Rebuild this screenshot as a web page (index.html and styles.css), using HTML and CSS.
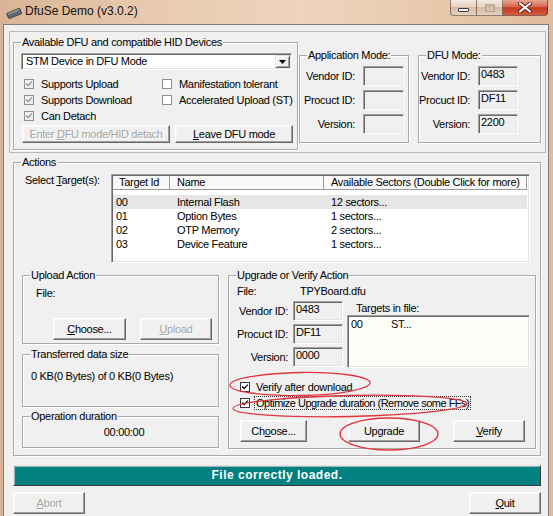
FILE: index.html
```html
<!DOCTYPE html>
<html>
<head>
<meta charset="utf-8">
<title>DfuSe Demo</title>
<link rel="stylesheet" href="styles.css">
</head>
<body>
<div class="titlebar">
  <svg class="appicon" width="18" height="14" viewBox="0 0 18 14">
    <g transform="rotate(-22 9 7)">
      <rect x="2" y="4.5" width="14" height="6" rx="1" fill="#5f666e" stroke="#2f3337" stroke-width="0.8"/>
      <rect x="3" y="5.2" width="12" height="1.6" fill="#8e959c"/>
      <g fill="#c9b27a">
        <rect x="3" y="2.6" width="1.2" height="1.8"/><rect x="5.4" y="2.6" width="1.2" height="1.8"/>
        <rect x="7.8" y="2.6" width="1.2" height="1.8"/><rect x="10.2" y="2.6" width="1.2" height="1.8"/>
        <rect x="12.6" y="2.6" width="1.2" height="1.8"/>
        <rect x="3" y="10.6" width="1.2" height="1.6"/><rect x="5.4" y="10.6" width="1.2" height="1.6"/>
        <rect x="7.8" y="10.6" width="1.2" height="1.6"/><rect x="10.2" y="10.6" width="1.2" height="1.6"/>
        <rect x="12.6" y="10.6" width="1.2" height="1.6"/>
      </g>
    </g>
  </svg>
  <span class="title">DfuSe Demo (v3.0.2)</span>
  <div class="caption">
    <div class="cbtn min"><span class="min-glyph"></span></div>
    <div class="cbtn max"><span class="max-glyph"></span></div>
    <div class="cbtn close">
      <svg width="16" height="11" viewBox="0 0 16 11">
        <path d="M3 1.5 L13 9.5 M13 1.5 L3 9.5" stroke="#5a1f16" stroke-width="4" stroke-linecap="round"/>
        <path d="M3 1.5 L13 9.5 M13 1.5 L3 9.5" stroke="#ffffff" stroke-width="2.2" stroke-linecap="round"/>
      </svg>
    </div>
  </div>
</div>

<div class="client">
  <div class="toppanel">
    <div class="group g-dev">
      <span class="legend">Available DFU and compatible HID Devices</span>
      <div class="combo">
        <span class="combo-text">STM Device in DFU Mode</span>
        <span class="combo-btn"><svg width="7" height="4" viewBox="0 0 7 4"><path d="M0 0h7L3.5 4z" fill="#000"/></svg></span>
      </div>
      <div class="checks">
        <div class="chk"><span class="cb dis"><svg viewBox="0 0 10 10"><path d="M1.5 4.5 L4 7 L8.5 2" fill="none" stroke="#8d8d8d" stroke-width="1.6"/></svg></span><span>Supports Upload</span></div>
        <div class="chk"><span class="cb"></span><span>Manifestation tolerant</span></div>
        <div class="chk"><span class="cb dis"><svg viewBox="0 0 10 10"><path d="M1.5 4.5 L4 7 L8.5 2" fill="none" stroke="#8d8d8d" stroke-width="1.6"/></svg></span><span>Supports Download</span></div>
        <div class="chk"><span class="cb"></span><span>Accelerated Upload (ST)</span></div>
        <div class="chk"><span class="cb dis"><svg viewBox="0 0 10 10"><path d="M1.5 4.5 L4 7 L8.5 2" fill="none" stroke="#8d8d8d" stroke-width="1.6"/></svg></span><span>Can Detach</span></div>
      </div>
      <div class="dev-btns">
        <div class="btn dis w-enter"><span>Enter <u>D</u>FU mode/HID detach</span></div>
        <div class="btn w-leave"><span><u>L</u>eave DFU mode</span></div>
      </div>
    </div>

    <div class="group g-app">
      <span class="legend">Application Mode:</span>
      <div class="idrows app-rows">
        <div class="idrow"><span class="idl">Vendor ID:</span><span class="edit"></span></div>
        <div class="idrow"><span class="idl">Procuct ID:</span><span class="edit"></span></div>
        <div class="idrow"><span class="idl">Version:</span><span class="edit"></span></div>
      </div>
    </div>

    <div class="group g-dfu">
      <span class="legend">DFU Mode:</span>
      <div class="idrows dfu-rows">
        <div class="idrow"><span class="idl">Vendor ID:</span><span class="edit">0483</span></div>
        <div class="idrow"><span class="idl">Procuct ID:</span><span class="edit">DF11</span></div>
        <div class="idrow"><span class="idl">Version:</span><span class="edit">2200</span></div>
      </div>
    </div>
  </div>

  <div class="group g-actions">
    <span class="legend">Actions</span>
    <div class="sel-row">
      <span class="sel-label">Select <u>T</u>arget(s):</span>
      <div class="list">
        <div class="lv-head">
          <span class="h1">Target Id</span><span class="h2">Name</span><span class="h3">Available Sectors (Double Click for more)</span>
        </div>
        <div class="lv-body">
          <div class="lv-row sel"><span class="c1">00</span><span class="c2">Internal Flash</span><span class="c3">12 sectors...</span></div>
          <div class="lv-row"><span class="c1">01</span><span class="c2">Option Bytes</span><span class="c3">1 sectors...</span></div>
          <div class="lv-row"><span class="c1">02</span><span class="c2">OTP Memory</span><span class="c3">2 sectors...</span></div>
          <div class="lv-row"><span class="c1">03</span><span class="c2">Device Feature</span><span class="c3">1 sectors...</span></div>
        </div>
      </div>
    </div>

    <div class="lower">
      <div class="leftcol">
        <div class="group g-upload">
          <span class="legend">Upload Action</span>
          <div class="u-file">File:</div>
          <div class="u-btns">
            <div class="btn w73"><span><u>C</u>hoose...</span></div>
            <div class="btn dis w72"><span><u>U</u>pload</span></div>
          </div>
        </div>
        <div class="group g-xfer">
          <span class="legend">Transferred data size</span>
          <div class="xfer-text">0 KB(0 Bytes) of 0 KB(0 Bytes)</div>
        </div>
        <div class="group g-dur">
          <span class="legend">Operation duration</span>
          <div class="dur-text">00:00:00</div>
        </div>
      </div>

      <div class="group g-upgrade">
        <span class="legend">Upgrade or Verify Action</span>
        <div class="ug-file"><span class="ug-fl">File:</span><span>TPYBoard.dfu</span></div>
        <div class="ug-mid">
          <div class="ug-ids">
            <div class="uidrow"><span class="uidl">Vendor ID:</span><span class="edit w50">0483</span></div>
            <div class="uidrow"><span class="uidl">Procuct ID:</span><span class="edit w50">DF11</span></div>
            <div class="uidrow"><span class="uidl">Version:</span><span class="edit w50">0000</span></div>
          </div>
          <div class="ug-targets">
            <div class="tif-label">Targets in file:</div>
            <div class="tif-box"><span class="t1">00</span><span>ST...</span></div>
          </div>
        </div>
        <div class="ug-chk"><span class="cb on"><svg viewBox="0 0 10 10"><path d="M1.5 4.5 L4 7 L8.5 2" fill="none" stroke="#000" stroke-width="1.7"/></svg></span><span>Verify after download</span></div>
        <div class="ug-chk"><span class="cb on"><svg viewBox="0 0 10 10"><path d="M1.5 4.5 L4 7 L8.5 2" fill="none" stroke="#000" stroke-width="1.7"/></svg></span><span class="focus">Optimize Upgrade duration (Remove some FFs)</span></div>
        <div class="ug-btns">
          <div class="btn w67"><span>Ch<u>o</u>ose...</span></div>
          <div class="btn w72 b-upg"><span>Upgrade</span></div>
          <div class="btn w72 b-ver"><span><u>V</u>erify</span></div>
        </div>
      </div>
    </div>
  </div>

  <div class="status">File correctly loaded.</div>

  <div class="bottom-row">
    <div class="btn dis w72"><span><u>A</u>bort</span></div>
    <div class="btn w72"><span><u>Q</u>uit</span></div>
  </div>
</div>

<svg class="marks" width="553" height="516" viewBox="0 0 553 516">
  <g fill="none" stroke="#e2343e" stroke-width="1.3">
    <ellipse cx="300" cy="384" rx="70" ry="11.5" transform="rotate(-1 300 384)"/>
    <ellipse cx="350" cy="406" rx="117" ry="10.5" transform="rotate(-1.2 350 406)"/>
    <ellipse cx="389" cy="434" rx="49" ry="16"/>
  </g>
</svg>
</body>
</html>
```

FILE: styles.css
```css
* { box-sizing: border-box; }
html, body { margin: 0; padding: 0; }
body {
  width: 553px;
  height: 516px;
  overflow: hidden;
  position: relative;
  background: linear-gradient(90deg, #d9b495 0%, #e8c9ad 25%, #eed4bd 55%, #e8c8ab 80%, #dfbb9c 100%);
  font-family: "Liberation Sans", Arial, sans-serif;
  font-size: 11px;
  letter-spacing: -0.3px;
  color: #000;
}
u { text-decoration: underline; text-underline-offset: 1px; }

/* title bar */
.titlebar { height: 24px; display: flex; align-items: flex-start; }
.appicon { margin: 6px 0 0 5px; flex: none; }
.title { margin: 4px 0 0 2px; font-size: 12px; line-height: 15px; letter-spacing: 0; color: #111; }
.caption { margin-left: auto; margin-right: 5px; display: flex; }
.cbtn {
  height: 16px;
  border: 1px solid rgba(60, 40, 30, 0.55);
  border-top: none;
  background: linear-gradient(#f4e9e0, #e6d3c4 45%, #d6bba7 50%, #e6d0bf);
  display: flex; align-items: center; justify-content: center;
}
.cbtn.min { width: 27px; border-bottom-left-radius: 4px; }
.cbtn.max { width: 26px; border-left: none; }
.cbtn.close {
  width: 45px; border-left: none; border-bottom-right-radius: 4px;
  background: linear-gradient(#eaa596, #d9654f 45%, #c53a22 52%, #d65a3f);
}
.min-glyph { width: 11px; height: 4px; margin-top: 5px; background: #fff; border: 1px solid #3b3b3b; border-radius: 1px; }
.max-glyph { width: 10px; height: 8px; border: 1px solid rgba(90, 80, 70, 0.35); box-shadow: inset 0 2px 0 rgba(90, 80, 70, 0.25); }

/* client */
.client {
  margin-left: 3px;
  width: 546px;
  height: 492px;
  background: #f0f0f0;
  border: 1px solid #7d7d7d;
  border-bottom: none;
}
.toppanel {
  margin: 6px 0 0 5px;
  width: 537px;
  height: 122px;
  border: 1px solid #b9b9b9;
  display: flex;
  align-items: flex-start;
}

/* group boxes */
.group {
  position: relative;
  border: 1px solid #a9a9a9;
  box-shadow: inset 1px 1px 0 #fff, 1px 1px 0 #fff;
}
.legend {
  position: absolute;
  top: -7px; left: 7px;
  padding: 0 1px;
  line-height: 13px;
  background: #f0f0f0;
  white-space: nowrap;
}

.g-dev { margin: 10px 0 0 3px; width: 285px; height: 108px; }
.g-app { margin: 23px 0 0 1px; width: 110px; height: 88px; }
.g-dfu { margin: 23px 0 0 9px; width: 123px; height: 88px; }

/* combo */
.combo {
  margin: 10px 0 0 7px;
  width: 271px; height: 17px;
  display: flex;
  background: #fff;
  border: 1px solid; border-color: #a0a0a0 #fff #fff #a0a0a0;
  box-shadow: inset 1px 1px 0 #696969, inset -1px -1px 0 #e3e3e3;
  padding: 1px;
}
.combo-text { flex: 1; padding-left: 3px; line-height: 13px; }
.combo-btn {
  width: 15px; height: 13px;
  background: #f0f0f0;
  border: 1px solid; border-color: #e3e3e3 #696969 #696969 #e3e3e3;
  box-shadow: inset 1px 1px 0 #fff, inset -1px -1px 0 #a0a0a0;
  display: flex; align-items: center; justify-content: center;
}

/* checkboxes */
.checks {
  margin: 6px 0 0 10px;
  display: grid;
  grid-template-columns: 138px auto;
  grid-auto-rows: 16px;
}
.chk { display: flex; align-items: center; white-space: nowrap; }
.cb {
  flex: none;
  width: 10px; height: 10px;
  border: 1px solid #8e8f8f;
  background: #fff;
  margin-right: 7px;
  display: flex;
}
.cb svg { width: 8px; height: 8px; }
.cb.dis { background: #ececec; }
.cb.on { border-color: #3a3a3a; }

/* buttons */
.btn {
  height: 22px;
  background: #f0f0f0;
  border: 1px solid; border-color: #fff #696969 #696969 #fff;
  box-shadow: inset -1px -1px 0 #a0a0a0, inset 1px 1px 0 #f7f7f7;
  display: flex; align-items: center; justify-content: center;
  white-space: nowrap;
  line-height: 13px;
}
.btn.dis { color: #a3a3a3; text-shadow: 1px 1px 0 #fff; }
.w72 { width: 72px; }
.w73 { width: 73px; }
.w67 { width: 67px; }
.dev-btns { display: flex; margin: 1px 0 0 8px; }
.dev-btns .btn { height: 18px; }
.w-enter { width: 148px; }
.w-leave { width: 118px; margin-left: 5px; }

/* id edit rows */
.idrows { margin-top: 10px; display: grid; grid-auto-rows: 20px; row-gap: 4px; }
.idrow { display: flex; align-items: center; }
.idl { text-align: right; white-space: nowrap; }
.app-rows .idl { width: 55px; margin-right: 8px; }
.app-rows .edit { width: 41px; }
.dfu-rows .idl { width: 51px; margin-right: 8px; }
.dfu-rows .edit { width: 40px; }
.edit {
  height: 20px;
  background: #f0f0f0;
  border: 1px solid; border-color: #a0a0a0 #fff #fff #a0a0a0;
  box-shadow: inset 1px 1px 0 #696969, inset -1px -1px 0 #e3e3e3;
  padding: 1px 0 0 2px;
  line-height: 13px;
}
.w50 { width: 50px; }

/* actions */
.g-actions { margin: 9px 0 0 9px; width: 528px; height: 294px; }
.sel-row { display: flex; margin-top: 11px; }
.sel-label { width: 97px; padding-left: 11px; line-height: 13px; white-space: nowrap; }
.list {
  width: 419px; height: 89px;
  background: #fff;
  border: 1px solid; border-color: #a0a0a0 #fff #fff #a0a0a0;
  box-shadow: inset 1px 1px 0 #696969, inset -1px -1px 0 #e3e3e3;
  padding: 1px;
}
.lv-head { display: flex; height: 14px; }
.lv-head span {
  height: 14px; line-height: 13px;
  background: #f9f9f9;
  border-right: 1px solid #9a9a9a;
  border-bottom: 1px solid #9a9a9a;
  white-space: nowrap;
}
.h1 { width: 57px; padding-left: 6px; }
.h2 { width: 154px; padding-left: 7px; }
.h3 { width: 203px; padding-left: 7px; }
.lv-body { padding-top: 5px; }
.lv-row { display: flex; height: 14px; line-height: 14px; width: 414px; white-space: nowrap; }
.lv-row.sel { background: #e6e6e6; }
.c1 { width: 57px; padding-left: 3px; }
.c2 { width: 154px; padding-left: 7px; }
.c3 { padding-left: 7px; }

.lower { display: flex; align-items: flex-start; margin-top: 12px; }
.leftcol { margin-left: 8px; width: 197px; }
.g-upload { width: 197px; height: 69px; }
.g-xfer { width: 197px; height: 53px; margin-top: 10px; }
.g-dur { width: 197px; height: 32px; margin-top: 9px; }
.u-file { margin-top: 11px; padding-left: 13px; line-height: 13px; }
.u-btns { display: flex; margin: 18px 0 0 30px; column-gap: 14px; }
.xfer-text { margin-top: 15px; padding-left: 8px; line-height: 13px; white-space: nowrap; }
.dur-text { margin-top: 9px; padding-left: 7px; text-align: center; line-height: 13px; }

.g-upgrade { margin-left: 9px; width: 308px; height: 174px; }
.ug-file { display: flex; margin-top: 9px; padding-left: 8px; line-height: 13px; }
.ug-fl { width: 63px; }
.ug-mid { display: flex; align-items: flex-start; }
.ug-ids { margin-top: 3px; display: grid; grid-auto-rows: 20px; row-gap: 3px; }
.uidrow { display: flex; align-items: center; }
.uidl { width: 59px; margin-right: 5px; text-align: right; white-space: nowrap; }
.ug-targets { margin-left: 4px; }
.tif-label { margin-top: 4px; padding-left: 9px; line-height: 13px; }
.tif-box {
  width: 183px; height: 53px;
  background: #fefef9;
  border: 1px solid; border-color: #a0a0a0 #fff #fff #a0a0a0;
  box-shadow: inset 1px 1px 0 #696969, inset -1px -1px 0 #e3e3e3;
  padding: 2px 0 0 3px;
  line-height: 13px;
  display: flex;
}
.t1 { width: 40px; }
.ug-chk { display: flex; align-items: center; height: 16px; padding-left: 11px; white-space: nowrap; }
.ug-mid + .ug-chk { margin-top: 11px; }
.ug-chk .cb { margin-right: 6px; }
.ug-chk .focus { margin-left: -2px; }
.focus { border: 1px dotted #333; padding: 0 1px; line-height: 12px; letter-spacing: -0.5px; }
.ug-btns { display: flex; margin-top: 9px; padding-left: 11px; }
.b-upg { margin-left: 41px; }
.b-ver { margin-left: 33px; }

/* status & bottom */
.status {
  margin: 9px 0 0 9px;
  width: 528px; height: 21px;
  background: #008080;
  color: #fff;
  font-weight: bold;
  font-size: 12px;
  letter-spacing: 0.5px;
  text-align: center;
  line-height: 19px;
  border: 1px solid; border-color: #e3e3e3 #3c3c3c #3c3c3c #e3e3e3;
  box-shadow: inset 1px 1px 0 #9fb9b9;
}
.bottom-row { display: flex; justify-content: space-between; margin: 6px 0 0 9px; width: 528px; }

.marks { position: absolute; left: 0; top: 0; pointer-events: none; }
```
